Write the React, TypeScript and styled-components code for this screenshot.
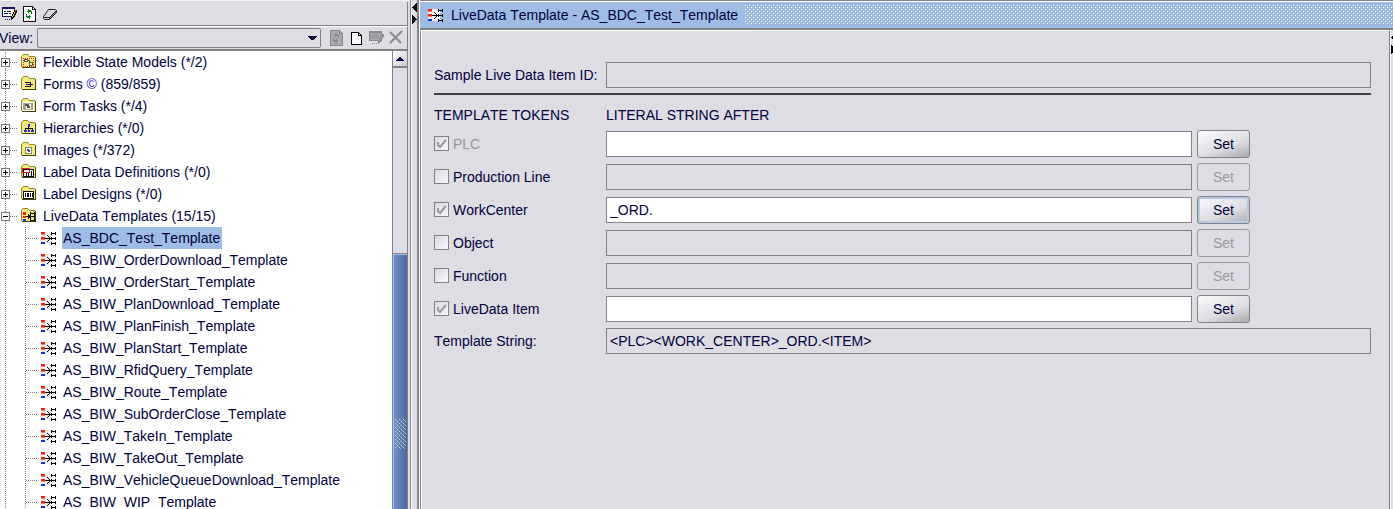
import React from 'react';
import styled, { createGlobalStyle, css } from 'styled-components';

const c = {
  bg: '#dedde3',
  line: '#838187',
  text: '#00003c',
  dim: '#9a999e',
  select: '#9fbde3',
};

const Global = createGlobalStyle`
  * { box-sizing: border-box; }
  html, body, #root { height: 100%; }
  body { margin: 0; overflow: hidden; background: ${c.bg}; }
  body, input, button, select { font: 14px/22px "Liberation Sans", Arial, sans-serif; font-kerning: none; color: ${c.text}; }
`;

const Window = styled.div`
  display: grid;
  grid-template-columns: 411px 9px minmax(0, 1fr);
  height: 100%;
  overflow: hidden;
`;

const Explorer = styled.aside`
  display: flex;
  flex-direction: column;
  min-height: 0;
  padding-top: 1px;
  border-right: 1px solid ${c.line};
  border-top: 1px solid #f4f4f6;
`;

const Toolbar = styled.div`
  display: flex;
  align-items: center;
  gap: 5px;
  height: 24px;
  margin-right: 2px;
  padding-left: 1px;
  border-right: 1px solid ${c.line};
  border-bottom: 1px solid ${c.line};
`;

const ViewBar = styled.div`
  display: flex;
  align-items: center;
  height: 25px;
  margin-right: 2px;
  border-top: 1px solid #fff;
  border-right: 1px solid ${c.line};
  border-bottom: 2px solid ${c.line};
`;

const ViewLabel = styled.label`
  width: 38px;
  margin-left: -1px;
`;

const SelectBox = styled.div`
  display: grid;
  width: 284px;
  align-items: center;
`;

const ViewSelect = styled.select`
  grid-area: 1 / 1;
  appearance: none;
  height: 20px;
  border: 1px solid ${c.line};
  border-radius: 2px;
  background: ${c.bg};
`;

const SelectArrow = styled.svg`
  grid-area: 1 / 1;
  justify-self: end;
  margin-right: 4px;
  pointer-events: none;
`;

const IconButton = styled.button`
  display: flex;
  padding: 0;
  border: 0;
  background: none;
`;

const ViewTools = styled.div`
  display: flex;
  gap: 4px;
  margin-left: 8px;
`;

const TreeArea = styled.div`
  display: flex;
  flex: 1;
  min-height: 0;
  margin-right: 2px;
  background: #fff;
`;

const Tree = styled.ul`
  flex: 1;
  margin: 0;
  padding: 0;
  overflow: hidden;
  list-style: none;
`;

const Row = styled.li`
  display: flex;
  height: 22px;
  white-space: nowrap;
`;

const RowText = styled.span<{ $selected?: boolean }>`
  padding: 0 2px 0 1px;
  ${p => p.$selected && css`background: ${c.select};`}
`;

const Copyright = styled.span`
  color: #1414e6;
`;

const ScrollBar = styled.div`
  display: flex;
  flex-direction: column;
  width: 16px;
  border-left: 1px solid ${c.line};
  border-right: 1px solid ${c.line};
  background: ${c.bg};
`;

const ScrollUp = styled.button`
  display: flex;
  align-items: center;
  justify-content: center;
  height: 17px;
  padding: 0;
  border: 0;
  border-bottom: 2px solid ${c.line};
  background: linear-gradient(135deg, #fff, #c9c8ce);
`;

const ScrollTrack = styled.div`
  flex: 186;
  border-bottom: 1px solid ${c.line};
`;

const ScrollThumb = styled.div`
  display: flex;
  flex: 255;
  flex-direction: column;
  align-items: center;
  border-top: 1px solid #9fc3ee;
  border-left: 1px solid #9fc3ee;
  background: linear-gradient(90deg, #6f8fc8, #4a69a0);
  &::before { content: ''; flex: 164; }
  &::after { content: ''; flex: 60; }
`;

const Divider = styled.div`
  display: flex;
  flex-direction: column;
  border-left: 1px solid #fff;
  border-right: 1px solid #fff;
`;

const DividerFace = styled.div`
  flex: 1;
  border-right: 2px solid ${c.line};
`;

const Panel = styled.main`
  display: flex;
  flex-direction: column;
  min-width: 0;
  border-top: 1px solid ${c.line};
`;

const PanelBody = styled.div`
  display: grid;
  flex: 1;
  grid-template-columns: minmax(0, 1fr) 3px;
`;

const TitleBar = styled.header`
  display: flex;
  align-items: center;
  gap: 7px;
  height: 29px;
  padding-left: 8px;
  border-top: 1px solid #fff;
  border-bottom: 2px solid ${c.line};
  background: ${c.select};
`;

const Title = styled.h1`
  margin: 0;
  font-size: 14px;
  font-weight: 400;
  white-space: nowrap;
`;

const Bumps = styled.svg`
  flex: 1;
  min-width: 0;
  height: 20px;
`;

const Content = styled.form`
  padding: 31px 18px 0 13px;
  border: 1px solid ${c.line};
  border-top-color: #fff;
  border-bottom: 0;
  box-shadow: inset 1px 0 #fff;
`;

const Line = styled.div`
  display: grid;
  grid-template-columns: 172px minmax(0, 1fr);
  align-items: center;
`;

const SampleLine = styled(Line)`
  padding-bottom: 5px;
  border-bottom: 2px solid #434146;
`;

const HeadLine = styled(Line)`
  height: 32px;
  padding-top: 8px;
`;

const ResultLine = styled(Line)`
  padding-top: 3px;
`;

const ColumnHead = styled.span``;

const TokenLine = styled.div`
  display: grid;
  grid-template-columns: 172px minmax(0, 1fr) 53px;
  align-items: center;
  height: 33px;
  margin-right: 121px;
`;

const TextBox = styled.input`
  width: 100%;
  height: 26px;
  padding: 0 3px;
  border: 1px solid ${c.line};
  border-radius: 0;
  outline: 0;
  background: #fff;
  &:read-only { background: ${c.bg}; }
`;

const TokenBox = styled.div`
  padding-right: 5px;
  display: flex;
`;

const TokenLabel = styled.label<{ $dim?: boolean }>`
  display: flex;
  align-items: center;
  gap: 4px;
  color: ${p => (p.$dim ? c.dim : c.text)};
`;

const CheckBox = styled.input`
  appearance: none;
  width: 15px;
  height: 15px;
  margin: 0;
  border: 1px solid ${c.line};
  background: linear-gradient(135deg, #dad9de, #f8f8fa);
  &:checked {
    background: url("data:image/svg+xml,%3Csvg xmlns='http://www.w3.org/2000/svg' width='13' height='13'%3E%3Cpath d='M3 5V8L5 10 11 3' fill='none' stroke='%239a999e' stroke-width='2'/%3E%3C/svg%3E"), linear-gradient(135deg, #dad9de, #f8f8fa);
  }
`;

const SetButton = styled.button<{ $focused?: boolean }>`
  height: 28px;
  padding: 0;
  border: 1px solid ${c.line};
  border-radius: 3px;
  background: linear-gradient(160deg, #fbfbfc, #dddce1 60%, #a9a8ad);
  ${p => p.$focused && css`box-shadow: inset 0 0 0 2px #b3cbe6;`}
  &:disabled { color: ${c.dim}; border-color: ${c.dim}; background: none; }
`;

const RightEdge = styled.div`
  border-left: 1px solid #fff;
`;

const LiveIcon = () => (
  <svg width="16" height="16" shapeRendering="crispEdges" aria-hidden="true">
    <path fill="#f1efef" d="M0 2h12v12H0z" />
    <path fill="#f82010" d="M0 2h4v2H0zM0 7h4v2H0z" />
    <path fill="#f8786c" d="M0 4h4v1H0zM0 9h4v1H0z" />
    <path fill="#1030f0" d="M0 12h4v2H0z" />
    <path fill="#000" d="M4 8h6v1H4zM6 5h1v1H6zM7 6h1v1H7zM8 7h1v3H8zM7 10h1v1H7zM6 11h1v1H6zM10 2h1v3h-1zM10 3h5v1h-5zM14 2h1v3h-1zM10 7h1v3h-1zM10 8h5v1h-5zM14 7h1v3h-1zM10 12h1v3h-1zM10 13h5v1h-5zM14 12h1v3h-1z" />
  </svg>
);

type Kind = 'flex' | 'form' | 'task' | 'tree' | 'image' | 'data' | 'label' | 'live';

const glyphs: Record<Kind, React.ReactNode> = {
  flex: (<><path fill="#e02818" d="M2 4h1v1H2zM4 4h1v1H4zM6 4h1v1H6zM8 4h1v1H8zM10 4h1v1h-1zM12 4h1v1h-1zM2 6h1v1H2zM2 8h1v1H2zM2 10h1v1H2zM2 12h1v1H2zM4 12h1v1H4zM6 12h1v1H6zM8 12h1v1H8zM10 12h1v1h-1zM12 12h1v1h-1zM12 6h1v1h-1zM12 8h1v1h-1zM12 10h1v1h-1z" /><path fill="#555" d="M3 5h4v3H3zM7 6h2v1H7zM8 6h1v3H8zM8 8h4v4H8z" /><path fill="#fff8b8" d="M4 6h2v1H4zM9 9h2v2H9z" /></>),
  form: (<path fill="#11113c" d="M4 6h6v1H4zM5 8h5v1H5zM4 10h6v1H4zM9 6h1v5H9zM10 8h2v1h-2z" />),
  task: (<><path fill="#fff" d="M1 4h12v9H1z" /><path fill="#a5a58c" d="M2 5h10v7H2z" /><path fill="#f4f4e8" d="M5 6h5v5H5z" /><path fill="#555" d="M4 6h4v2H4zM6 8h3v2H6z" /></>),
  tree: (<><path fill="#1a34d8" d="M7 4h2v3H7zM3 10h3v2H3zM7 10h2v2H7zM10 10h3v2h-3z" /><path fill="#111" d="M7 7h1v3H7zM4 8h8v1H4zM4 8h1v2H4zM11 8h1v2h-1z" /></>),
  image: (<><path fill="#8a8a68" d="M4 5h7v7H4z" /><path fill="#fff" d="M5 6h5v5H5z" /><path fill="#205a9a" d="M6 7h2v2H6z" /><path fill="#802040" d="M8 8h1v2H7V9h1z" /></>),
  data: (<><path fill="#111" d="M2 5h11v8H2z" /><path fill="#fff" d="M3 6h9v6H3z" /><path fill="#111" d="M5 9h1v3H5zM7 9h1v3H7zM10 7h1v5h-1z" /><path fill="#e02020" d="M1 4h8v1H1zM1 8h8v1H1zM1 4h1v5H1zM8 4h1v5H8z" /></>),
  label: (<><path fill="#111" d="M2 5h11v8H2z" /><path fill="#fff" d="M3 6h9v6H3z" /><path fill="#111" d="M4 7h1v4H4zM6 7h2v4H6zM9 7h1v4H9zM11 7h1v4h-1z" /></>),
  live: (<><path fill="#f82010" d="M2 4h3v3H2zM2 8h3v2H2z" /><path fill="#1030f0" d="M2 11h3v2H2z" /><path fill="#111" d="M5 8h4v1H5zM7 6h1v5H7zM8 7h1v3H8zM9 4h1v10H9zM13 4h1v10h-1zM9 5h4v1H9zM9 8h4v1H9zM9 12h4v1H9z" /></>),
};

const Folder = ({ kind }: { kind: Kind }) => (
  <svg width="16" height="22" viewBox="0 -3 16 22" shapeRendering="crispEdges" aria-hidden="true">
    <path fill="#8f8926" d="M2 0h5v1h1v1h6v1h1v11H1V13H0V2h1V1h1z" />
    <path fill="#f5ea82" d="M2 1h5v1h1v1h6v10H1V2h1z" />
    <path fill="#45430a" d="M14 3h1v11H1v-1h13z" />
    {glyphs[kind]}
  </svg>
);

const Branch = ({ first, open }: { first?: boolean; open?: boolean }) => (
  <svg width="21" height="22" shapeRendering="crispEdges" aria-hidden="true">
    <path fill="none" stroke="#77767b" strokeDasharray="1 1" d={`M5.500 ${first ? 1 : 0}V22M10 11.500h7`} />
    <path fill="#fff" stroke="#77767b" d="M1.500 7.500h8v8h-8z" />
    <path fill="#000" d={open ? 'M3 11h5v1H3z' : 'M3 11h5v1H3zM5 9h1v5H5z'} />
  </svg>
);

const Leaf = () => (
  <svg width="41" height="22" shapeRendering="crispEdges" aria-hidden="true">
    <path fill="none" stroke="#77767b" strokeDasharray="1 1" d="M5.500 0V22M25.500 0V22M26 11.500h11" />
  </svg>
);

const LeafIcon = styled.span`
  display: flex;
  align-items: center;
  width: 21px;
`;

const FolderIcon = styled.span`
  display: flex;
  width: 21px;
`;

const NoteIcon = ({ off }: { off?: boolean }) => {
  const ink = off ? '#8a898e' : '#16165a';
  return (
    <svg width="16" height="16" shapeRendering="crispEdges" aria-hidden="true">
      <path fill={off ? '#a5a4a8' : '#fff'} stroke={ink} d="M1.500 1.500h12v9h-12z" />
      <path fill={ink} d="M1 1h13v2H1zM3 5h2v1H3zM6 5h4v1H6zM3 7h4v1H3zM8 7h2v1H8zM4 13h1v1H4zM6 13h1v1H6zM8 13h1v1H8zM10 13h1v1h-1z" />
      <path fill={off ? ink : '#000'} d="M13 4h3v3h-1v2h-1v2h-1v1h-1v1h-2v-3h1V8h1V6h1z" />
      <path fill={off ? '#a5a4a8' : '#f5d020'} d="M13 6h1v2h-1v2h-1v1h-1v-1h1V8h1z" />
      <path fill={off ? ink : '#e02818'} d="M14 4h1v2h-1z" />
    </svg>
  );
};

const RefreshIcon = ({ off }: { off?: boolean }) => {
  const ink = off ? '#89888d' : '#087a18';
  return (
    <svg width="15" height="16" shapeRendering="crispEdges" aria-hidden="true">
      <path fill={off ? '#aaa9ad' : '#fff'} stroke={off ? ink : '#111'} d="M1.500 .5h9l3 3v12h-12z" />
      <path fill={off ? ink : '#111'} d="M10 0h1v3h3v1h-4z" />
      <path fill={ink} d="M6 3h1v1h2v1h1v3H9V6H7v1H6V6H5V5h1zM4 8h1v2h2V9h1v1h1v1H8v2H7v-1H5v-1H4z" />
    </svg>
  );
};

const folders: { kind: Kind; name: string; count: string; mark?: boolean; open?: boolean }[] = [
  { kind: 'flex', name: 'Flexible State Models', count: '(*/2)' },
  { kind: 'form', name: 'Forms', count: '(859/859)', mark: true },
  { kind: 'task', name: 'Form Tasks', count: '(*/4)' },
  { kind: 'tree', name: 'Hierarchies', count: '(*/0)' },
  { kind: 'image', name: 'Images', count: '(*/372)' },
  { kind: 'data', name: 'Label Data Definitions', count: '(*/0)' },
  { kind: 'label', name: 'Label Designs', count: '(*/0)' },
  { kind: 'live', name: 'LiveData Templates', count: '(15/15)', open: true },
];

const templates = [
  'AS_BDC_Test_Template', 'AS_BIW_OrderDownload_Template', 'AS_BIW_OrderStart_Template',
  'AS_BIW_PlanDownload_Template', 'AS_BIW_PlanFinish_Template', 'AS_BIW_PlanStart_Template',
  'AS_BIW_RfidQuery_Template', 'AS_BIW_Route_Template', 'AS_BIW_SubOrderClose_Template',
  'AS_BIW_TakeIn_Template', 'AS_BIW_TakeOut_Template', 'AS_BIW_VehicleQueueDownload_Template',
  'AS_BIW_WIP_Template',
];

const tokens = [
  { name: 'PLC', on: true, value: '', locked: true },
  { name: 'Production Line', on: false, value: '' },
  { name: 'WorkCenter', on: true, value: '_ORD.', focused: true },
  { name: 'Object', on: false, value: '' },
  { name: 'Function', on: false, value: '' },
  { name: 'LiveData Item', on: true, value: '' },
];

export default function App() {
  return (
    <Window>
      <Global />
      <Explorer>
        <Toolbar>
          <IconButton aria-label="Edit"><NoteIcon /></IconButton>
          <IconButton aria-label="Refresh"><RefreshIcon /></IconButton>
          <IconButton aria-label="Clear">
            <svg width="16" height="16" aria-hidden="true">
              <path fill="#d8d8da" stroke="#222" d="M6.500 3.500h7l1 1v2l-7 7h-5l-1-1v-2z" />
              <path fill="#8c8c90" stroke="#222" d="M7.500 11.500l7-7v2l-7 7z" />
              <path fill="none" stroke="#222" d="M1.500 11.500h6" />
            </svg>
          </IconButton>
        </Toolbar>
        <ViewBar>
          <ViewLabel htmlFor="view">View:</ViewLabel>
          <SelectBox>
            <ViewSelect id="view" />
            <SelectArrow width="9" height="5" shapeRendering="crispEdges"><path fill={c.text} d="M0 0h9v1H8v1H7v1H6v1H3V3H2V2H1V1H0z" /></SelectArrow>
          </SelectBox>
          <ViewTools>
            <IconButton disabled aria-label="Refresh view"><RefreshIcon off /></IconButton>
            <IconButton aria-label="New view">
              <svg width="16" height="16" shapeRendering="crispEdges" aria-hidden="true">
                <path fill="#fff" stroke="#000" d="M3.500 2.500h7l3 3v9h-10z" /><path fill="#000" d="M10 2h1v3h3v1h-4z" />
              </svg>
            </IconButton>
            <IconButton disabled aria-label="Edit view"><NoteIcon off /></IconButton>
            <IconButton disabled aria-label="Delete view">
              <svg width="16" height="16" aria-hidden="true"><path fill="none" stroke="#8a898e" strokeWidth="2" d="M2 2l11 11M14 1L2 13" /></svg>
            </IconButton>
          </ViewTools>
        </ViewBar>
        <TreeArea>
          <Tree>
            {folders.map((f, i) => (
              <Row key={f.name}>
                <Branch first={i === 0} open={f.open} />
                <FolderIcon><Folder kind={f.kind} /></FolderIcon>
                <RowText>{f.name} {f.mark && <Copyright>© </Copyright>}{f.count}</RowText>
              </Row>
            ))}
            {templates.map((t, i) => (
              <Row key={t}>
                <Leaf />
                <LeafIcon><LiveIcon /></LeafIcon>
                <RowText $selected={i === 0}>{t}</RowText>
              </Row>
            ))}
          </Tree>
          <ScrollBar>
            <ScrollUp aria-label="Scroll up">
              <svg width="8" height="4" shapeRendering="crispEdges"><path fill={c.text} d="M3 0h2v1h1v1h1v1h1v1H0V3h1V2h1V1h1z" /></svg>
            </ScrollUp>
            <ScrollTrack />
            <ScrollThumb>
              <svg width="11" height="30" shapeRendering="crispEdges" aria-hidden="true">
                <defs><pattern id="grip" width="4" height="4" patternUnits="userSpaceOnUse"><path fill="#c9d6ec" d="M0 0h1v1H0zM2 2h1v1H2z" /><path fill="#a5a4a8" d="M1 1h1v1H1zM3 3h1v1H3z" /></pattern></defs>
                <rect width="11" height="30" fill="url(#grip)" />
              </svg>
            </ScrollThumb>
          </ScrollBar>
        </TreeArea>
      </Explorer>
      <Divider>
        <DividerFace>
          <svg width="6" height="26" shapeRendering="crispEdges" aria-hidden="true">
            <path d="M5 3v9L0 8V7zM0 15v9l5-4v-1z" />
          </svg>
        </DividerFace>
      </Divider>
      <Panel>
        <TitleBar>
          <LiveIcon />
          <Title>LiveData Template - AS_BDC_Test_Template</Title>
          <Bumps shapeRendering="crispEdges" aria-hidden="true">
            <defs><pattern id="bumps" width="4" height="4" patternUnits="userSpaceOnUse"><path fill="#fff" d="M0 0h1v1H0zM2 2h1v1H2z" /><path fill="#98a3b4" d="M1 1h1v1H1zM3 3h1v1H3z" /></pattern></defs>
            <rect width="100%" height="20" fill="url(#bumps)" />
          </Bumps>
        </TitleBar>
        <PanelBody>
          <Content onSubmit={e => e.preventDefault()}>
            <SampleLine>
              <label htmlFor="sample">Sample Live Data Item ID:</label>
              <TextBox id="sample" readOnly />
            </SampleLine>
            <HeadLine>
              <ColumnHead>TEMPLATE TOKENS</ColumnHead>
              <ColumnHead>LITERAL STRING AFTER</ColumnHead>
            </HeadLine>
            {tokens.map(t => (
              <TokenLine key={t.name}>
                <TokenLabel $dim={t.locked}>
                  <CheckBox type="checkbox" defaultChecked={t.on} disabled={t.locked} />
                  {t.name}
                </TokenLabel>
                <TokenBox><TextBox aria-label={`${t.name} literal`} defaultValue={t.value} readOnly={!t.on} /></TokenBox>
                <SetButton type="button" disabled={!t.on} $focused={t.focused}>Set</SetButton>
              </TokenLine>
            ))}
            <ResultLine>
              <label htmlFor="result">Template String:</label>
              <TextBox id="result" readOnly value="<PLC><WORK_CENTER>_ORD.<ITEM>" />
            </ResultLine>
          </Content>
          <RightEdge>
            <svg width="2" height="26" shapeRendering="crispEdges" aria-hidden="true"><path d="M1 6h1v3H1zM0 7h2v1H0zM0 15h1v9H0zM1 16h1v7H1z" /></svg>
          </RightEdge>
        </PanelBody>
      </Panel>
    </Window>
  );
}
